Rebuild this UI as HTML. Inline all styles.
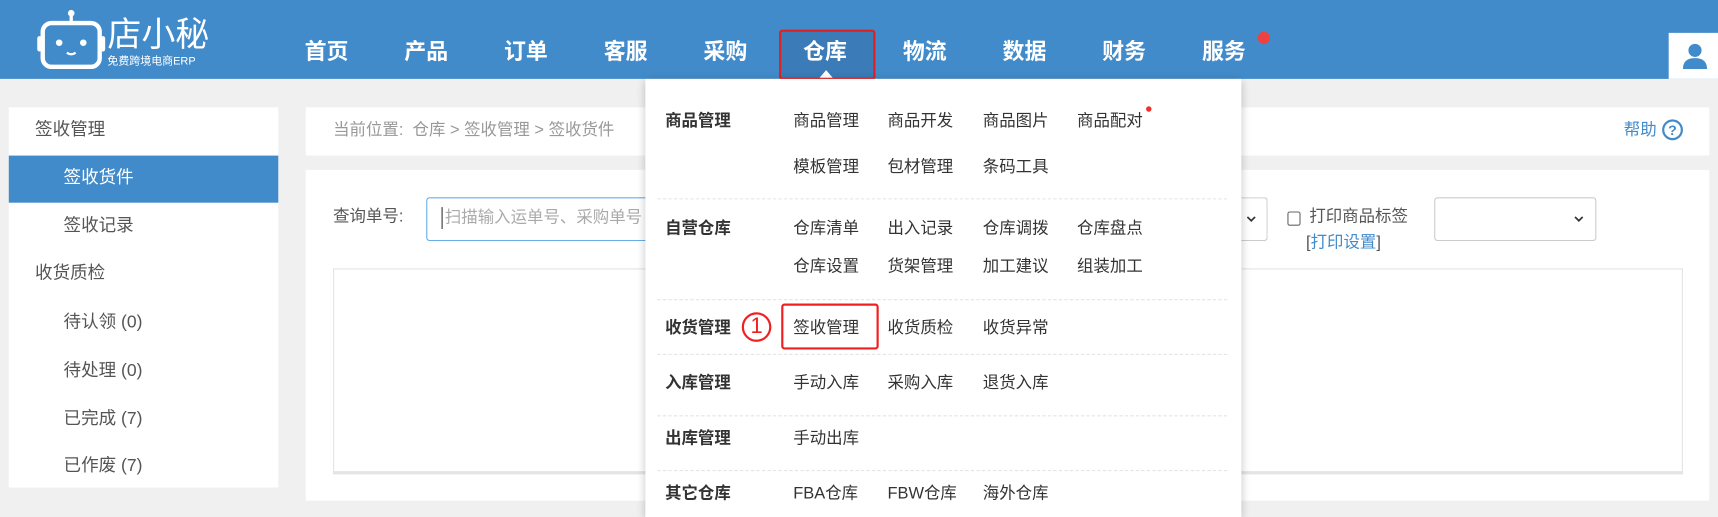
<!DOCTYPE html>
<html><head><meta charset="utf-8"><style>
*{margin:0;padding:0;box-sizing:border-box}
html,body{width:1718px;height:507px;overflow:hidden;background:#f0f0f0}
#w{position:absolute;left:0;top:0;width:1568px;height:463px;transform:scale(1.09566);transform-origin:0 0;font-family:"Liberation Sans","Noto Sans CJK SC",sans-serif;color:#333}
.a{position:absolute;white-space:nowrap}
.hdr{left:0;top:0;width:1568px;height:72px;background:#428bca}
.nav{top:35px;font-size:20px;font-weight:bold;color:#fff;line-height:26px;width:80px;text-align:center}
.side{font-size:16px;color:#555;line-height:20px}
.mh{font-size:15px;font-weight:bold;color:#333;left:607px}
.mi{font-size:15px;color:#333}
.dv{left:600px;width:520px;border-top:1px dashed #e4e4e4;height:0}
</style></head><body><div id="w">
<div class="a hdr"></div>
<svg class="a" style="left:33px;top:8px" width="64" height="56" viewBox="0 0 64 56">
<circle cx="32" cy="4" r="3" fill="#fff"/><rect x="30.5" y="5" width="3" height="8" fill="#fff"/>
<rect x="6" y="13" width="52" height="40" rx="8" fill="none" stroke="#fff" stroke-width="4"/>
<rect x="1" y="25" width="4" height="14" rx="2" fill="#fff"/><rect x="59" y="25" width="4" height="14" rx="2" fill="#fff"/>
<circle cx="21" cy="31" r="3" fill="#fff"/><circle cx="43" cy="31" r="3" fill="#fff"/>
<path d="M28 40 q4 3 8 0" stroke="#fff" stroke-width="2" fill="none"/></svg>
<div class="a" style="left:98px;top:14px;font-size:31px;color:#fff;line-height:36px">店小秘</div>
<div class="a" style="left:98px;top:51px;font-size:10px;color:#fff;line-height:12px">免费跨境电商ERP</div>
<div class="a" style="left:711px;top:27px;width:88px;height:46px;background:#3a7bb8;border:2px solid #e02020;border-radius:3px"></div>
<div class="a" style="left:748px;top:64px;width:0;height:0;border-left:6px solid transparent;border-right:6px solid transparent;border-bottom:7px solid #fff"></div>
<div class="a nav" style="left:258px">首页</div><div class="a nav" style="left:349px">产品</div><div class="a nav" style="left:440px">订单</div><div class="a nav" style="left:531px">客服</div><div class="a nav" style="left:622px">采购</div><div class="a nav" style="left:713px">仓库</div><div class="a nav" style="left:804px">物流</div><div class="a nav" style="left:895px">数据</div><div class="a nav" style="left:986px">财务</div><div class="a nav" style="left:1077px">服务</div>
<div class="a" style="left:1148px;top:29px;width:11px;height:11px;border-radius:50%;background:#f04040"></div>
<div class="a" style="left:1523px;top:30px;width:45px;height:42px;background:#fff"></div>
<svg class="a" style="left:1535px;top:38px" width="24" height="26" viewBox="0 0 24 26"><circle cx="12" cy="8" r="6" fill="#428bca"/><path d="M1 25 q0-10 11-10 q11 0 11 10z" fill="#428bca"/></svg>

<div class="a" style="left:8px;top:98px;width:246px;height:347px;background:#fff"></div>
<div class="a" style="left:8px;top:142px;width:246px;height:43px;background:#428bca"></div>
<div class="a side" style="left:32px;top:109px">签收管理</div>
<div class="a side" style="left:58px;top:153px;color:#fff">签收货件</div>
<div class="a side" style="left:58px;top:197px">签收记录</div>
<div class="a side" style="left:32px;top:240px">收货质检</div>
<div class="a side" style="left:58px;top:285px">待认领 (0)</div>
<div class="a side" style="left:58px;top:329px">待处理 (0)</div>
<div class="a side" style="left:58px;top:373px">已完成 (7)</div>
<div class="a side" style="left:58px;top:416px">已作废 (7)</div>

<div class="a" style="left:279px;top:98px;width:1281px;height:44px;background:#fff"></div>
<div class="a" style="left:304px;top:109px;font-size:15px;color:#999;line-height:20px">当前位置:&nbsp;&nbsp;仓库 &gt; 签收管理 &gt; 签收货件</div>
<div class="a" style="left:1482px;top:109px;font-size:15px;color:#428bca;line-height:20px">帮助</div>
<div class="a" style="left:1517px;top:109px;width:19px;height:19px;border:2px solid #428bca;border-radius:50%;color:#428bca;font-size:13px;font-weight:bold;text-align:center;line-height:15px">?</div>
<div class="a" style="left:279px;top:155px;width:1281px;height:302px;background:#fff"></div>
<div class="a" style="left:304px;top:188px;font-size:15px;color:#555;line-height:20px">查询单号:</div>
<div class="a" style="left:389px;top:180px;width:260px;height:40px;border:1px solid #66afe9;border-radius:3px"></div>
<div class="a" style="left:403px;top:189px;font-size:15px;color:#aaa;line-height:20px;border-left:1px solid #333;padding-left:2px">扫描输入运单号、采购单号</div>
<div class="a" style="left:1100px;top:180px;width:57px;height:40px;border:1px solid #ccc;border-radius:3px;border-left:none"></div>
<svg class="a" style="left:1137px;top:196px" width="10" height="8" viewBox="0 0 10 8"><path d="M1.5 2 L5 5.5 L8.5 2" stroke="#333" stroke-width="1.6" fill="none"/></svg>
<div class="a" style="left:1175px;top:193px;width:12px;height:13px;border:1px solid #666;border-radius:2px"></div>
<div class="a" style="left:1195px;top:188px;font-size:15px;color:#555;line-height:20px">打印商品标签</div>
<div class="a" style="left:1192px;top:212px;font-size:15px;color:#428bca;line-height:20px"><span style="color:#555">[</span>打印设置<span style="color:#555">]</span></div>
<div class="a" style="left:1309px;top:180px;width:148px;height:40px;border:1px solid #ccc;border-radius:3px"></div>
<svg class="a" style="left:1436px;top:196px" width="10" height="8" viewBox="0 0 10 8"><path d="M1.5 2 L5 5.5 L8.5 2" stroke="#333" stroke-width="1.6" fill="none"/></svg>
<div class="a" style="left:304px;top:245px;width:1232px;height:188px;border:1px solid #e4e4e4;border-bottom:3px solid #e4e4e4"></div>

<div class="a" style="left:589px;top:72px;width:544px;height:400px;background:#fff;box-shadow:0 2px 8px rgba(0,0,0,.25)"></div>
<div class="a mh" style="top:99px">商品管理</div>
<div class="a mi" style="left:724px;top:99px">商品管理</div><div class="a mi" style="left:810px;top:99px">商品开发</div><div class="a mi" style="left:897px;top:99px">商品图片</div><div class="a mi" style="left:983px;top:99px">商品配对</div>
<div class="a" style="left:1046px;top:97px;width:5px;height:5px;border-radius:50%;background:#f03030"></div>
<div class="a mi" style="left:724px;top:141px">模板管理</div><div class="a mi" style="left:810px;top:141px">包材管理</div><div class="a mi" style="left:897px;top:141px">条码工具</div>
<div class="a dv" style="top:181px"></div>
<div class="a mh" style="top:197px">自营仓库</div>
<div class="a mi" style="left:724px;top:197px">仓库清单</div><div class="a mi" style="left:810px;top:197px">出入记录</div><div class="a mi" style="left:897px;top:197px">仓库调拨</div><div class="a mi" style="left:983px;top:197px">仓库盘点</div>
<div class="a mi" style="left:724px;top:232px">仓库设置</div><div class="a mi" style="left:810px;top:232px">货架管理</div><div class="a mi" style="left:897px;top:232px">加工建议</div><div class="a mi" style="left:983px;top:232px">组装加工</div>
<div class="a dv" style="top:273px"></div>
<div class="a mh" style="top:288px">收货管理</div>
<div class="a" style="left:677px;top:285px;width:27px;height:27px;border:2px solid #f02020;border-radius:50%;color:#f02020;font-size:20px;text-align:center;line-height:23px">1</div>
<div class="a" style="left:713px;top:277px;width:89px;height:42px;border:2px solid #f02020;border-radius:3px"></div>
<div class="a mi" style="left:724px;top:288px">签收管理</div><div class="a mi" style="left:810px;top:288px">收货质检</div><div class="a mi" style="left:897px;top:288px">收货异常</div>
<div class="a dv" style="top:323px"></div>
<div class="a mh" style="top:338px">入库管理</div>
<div class="a mi" style="left:724px;top:338px">手动入库</div><div class="a mi" style="left:810px;top:338px">采购入库</div><div class="a mi" style="left:897px;top:338px">退货入库</div>
<div class="a dv" style="top:379px"></div>
<div class="a mh" style="top:389px">出库管理</div>
<div class="a mi" style="left:724px;top:389px">手动出库</div>
<div class="a dv" style="top:429px"></div>
<div class="a mh" style="top:439px">其它仓库</div>
<div class="a mi" style="left:724px;top:439px">FBA仓库</div><div class="a mi" style="left:810px;top:439px">FBW仓库</div><div class="a mi" style="left:897px;top:439px">海外仓库</div>
</div></body></html>
